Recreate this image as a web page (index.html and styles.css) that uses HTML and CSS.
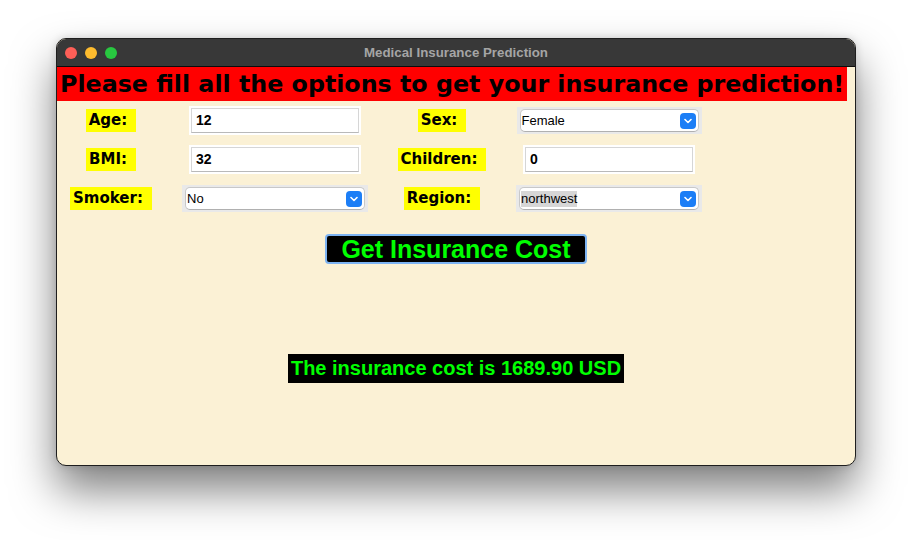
FILE: index.html
```html
<!DOCTYPE html>
<html>
<head>
<meta charset="utf-8">
<title>Medical Insurance Prediction</title>
<link rel="stylesheet" href="styles.css">
</head>
<body>
<div class="stage">
  <div class="window">
    <div class="titlebar">
      <div class="lights">
        <span class="light red"></span>
        <span class="light yellow"></span>
        <span class="light green"></span>
      </div>
      <div class="title">Medical Insurance Prediction</div>
    </div>
    <div class="content">
      <div class="header"><span class="header-text">Please fill all the options to get your insurance prediction!</span></div>
      <div class="form">
        <div class="cell"><span class="label">Age:</span></div>
        <div class="cell"><div class="entry"><div class="entry-field">12</div></div></div>
        <div class="cell"><span class="label">Sex:</span></div>
        <div class="cell"><div class="combo"><div class="combo-field"><span class="combo-text">Female</span><span class="combo-btn"><svg width="8" height="6" viewBox="0 0 8 6"><path d="M1 1.5 L4 4.5 L7 1.5" fill="none" stroke="#fff" stroke-width="1.6" stroke-linecap="round" stroke-linejoin="round"/></svg></span></div></div></div>

        <div class="cell"><span class="label">BMI:</span></div>
        <div class="cell"><div class="entry"><div class="entry-field">32</div></div></div>
        <div class="cell"><span class="label">Children:</span></div>
        <div class="cell"><div class="entry"><div class="entry-field">0</div></div></div>

        <div class="cell"><span class="label">Smoker:</span></div>
        <div class="cell"><div class="combo wide"><div class="combo-field"><span class="combo-text">No</span><span class="combo-btn"><svg width="8" height="6" viewBox="0 0 8 6"><path d="M1 1.5 L4 4.5 L7 1.5" fill="none" stroke="#fff" stroke-width="1.6" stroke-linecap="round" stroke-linejoin="round"/></svg></span></div></div></div>
        <div class="cell"><span class="label">Region:</span></div>
        <div class="cell"><div class="combo wide"><div class="combo-field"><span class="combo-text selected">northwest</span><span class="combo-btn"><svg width="8" height="6" viewBox="0 0 8 6"><path d="M1 1.5 L4 4.5 L7 1.5" fill="none" stroke="#fff" stroke-width="1.6" stroke-linecap="round" stroke-linejoin="round"/></svg></span></div></div></div>
      </div>
      <div class="actions">
        <button class="cost-btn">Get Insurance Cost</button>
      </div>
      <div class="result-wrap">
        <div class="result">The insurance cost is 1689.90 USD</div>
      </div>
    </div>
  </div>
</div>
</body>
</html>
```

FILE: styles.css
```css
html, body {
  margin: 0;
  padding: 0;
  background: #ffffff;
}
.stage {
  box-sizing: border-box;
  min-height: 540px;
  padding: 38px 56px;
  display: flex;
  align-items: flex-start;
}
.window {
  width: 798px;
  height: 426px;
  border: 1px solid #1e1e1e;
  border-radius: 10px;
  overflow: hidden;
  background: #fbf1d5;
  box-shadow: 0 24px 44px rgba(0, 0, 0, 0.5), 0 0 8px rgba(0, 0, 0, 0.15);
  display: flex;
  flex-direction: column;
}
.titlebar {
  height: 27px;
  background: #383838;
  border-bottom: 1px solid #0c0c0c;
  display: flex;
  align-items: center;
  position: relative;
  flex: none;
}
.lights {
  display: flex;
  gap: 8px;
  padding-left: 8px;
}
.light {
  width: 12px;
  height: 12px;
  border-radius: 50%;
  display: block;
}
.light.red { background: #fe5f57; }
.light.yellow { background: #febc2e; }
.light.green { background: #28c840; }
.title {
  position: absolute;
  left: 0;
  right: 0;
  top: 0;
  bottom: 0;
  display: flex;
  align-items: center;
  justify-content: center;
  font-family: "Liberation Sans", Arial, sans-serif;
  font-weight: bold;
  font-size: 13.3px;
  color: #a5a5a5;
  pointer-events: none;
}
.content {
  flex: 1;
  display: flex;
  flex-direction: column;
}
.header {
  display: flex;
}
.header-text {
  background: #ff0000;
  color: #000;
  font-family: "DejaVu Sans", Verdana, sans-serif;
  font-weight: bold;
  font-size: 23.75px;
  line-height: 34px;
  height: 34px;
  padding: 0 3px;
  white-space: nowrap;
}
.form {
  margin-top: 5px;
  display: grid;
  grid-template-columns: 108px 220px 114px 220px;
  grid-auto-rows: 29px;
  row-gap: 10px;
}
.cell {
  display: flex;
  align-items: center;
  justify-content: center;
}
.label {
  background: #ffff00;
  color: #000;
  font-family: "DejaVu Sans", Verdana, sans-serif;
  font-weight: bold;
  font-size: 15px;
  line-height: 23px;
  height: 23px;
  padding: 0 9px 0 3px;
  white-space: nowrap;
}
.entry {
  width: 168px;
  height: 25px;
  background: #ffffff;
  padding: 2px;
}
.entry-field {
  box-sizing: border-box;
  height: 25px;
  border: 1px solid #d6d6d6;
  border-bottom-color: #b9b9b9;
  background: #fff;
  font-family: "Liberation Sans", Arial, sans-serif;
  font-weight: bold;
  font-size: 14px;
  line-height: 23px;
  padding-left: 4px;
  color: #000;
}
.combo {
  width: 179px;
  height: 23px;
  padding: 2px 3px;
  background: #e9e9e9;
}
.combo.wide {
  width: 180px;
}
.combo-field {
  box-sizing: border-box;
  height: 23px;
  background: #ffffff;
  border: 1px solid #c8c8c8;
  border-bottom-color: #b0b0b0;
  border-radius: 5px;
  display: flex;
  align-items: center;
  justify-content: space-between;
  padding: 0 2px 0 1px;
}
.combo-text {
  font-family: "Liberation Sans", Arial, sans-serif;
  font-size: 13px;
  color: #000;
  line-height: 16px;
}
.combo-text.selected {
  background: #d6d6d6;
}
.combo-btn {
  width: 16px;
  height: 16px;
  border-radius: 4px;
  background: #1c7ef6;
  display: flex;
  align-items: center;
  justify-content: center;
}
.combo-btn svg {
  display: block;
}
.actions {
  display: flex;
  justify-content: center;
  margin-top: 21px;
}
.cost-btn {
  width: 262px;
  height: 30px;
  box-sizing: border-box;
  border: 2px solid #7db3f2;
  border-radius: 4px;
  background: #000;
  color: #00ff00;
  font-family: "Liberation Sans", Arial, sans-serif;
  font-weight: bold;
  font-size: 25px;
  line-height: 26px;
  padding: 0;
  margin: 0;
}
.result-wrap {
  display: flex;
  justify-content: center;
  margin-top: 90px;
}
.result {
  background: #000;
  color: #00ff00;
  font-family: "Liberation Sans", Arial, sans-serif;
  font-weight: bold;
  font-size: 20px;
  line-height: 29px;
  height: 29px;
  padding: 0 3px;
  white-space: nowrap;
}
```
